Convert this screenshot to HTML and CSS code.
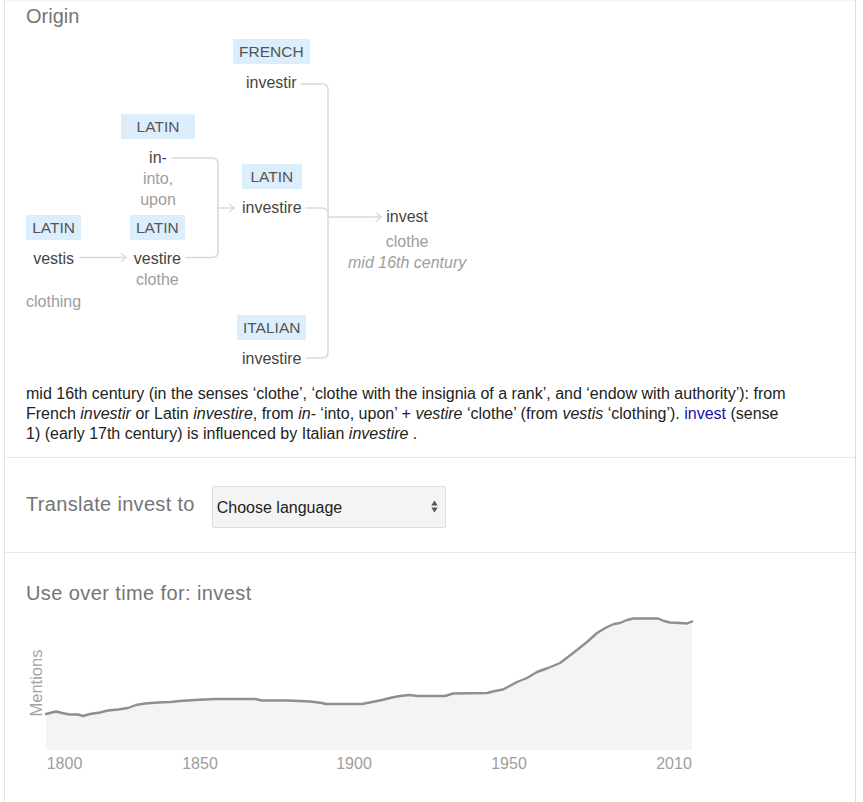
FILE: index.html
```html
<!DOCTYPE html>
<html lang="en">
<head>
<meta charset="utf-8">
<title>invest – Origin</title>
<link rel="stylesheet" href="styles.css">
</head>
<body>
<div class="card">
  <section class="origin">
    <h2 class="title">Origin</h2>
    <div class="etym">
      <svg class="etym-lines" width="829" height="356" viewBox="0 0 829 356" aria-hidden="true">
        <g transform="translate(-26 -28)" fill="none" stroke="#dadada" stroke-width="1.5" stroke-linecap="round" stroke-linejoin="round">
          <path d="M80 257.5 H126"/>
          <path d="M121.5 253.5 L126 257.5 L121.5 261.5"/>
          <path d="M172 158 H212 Q218 158 218 164 V251.5 Q218 257.5 212 257.5 H186"/>
          <path d="M218 208 H234"/>
          <path d="M229.5 204 L234 208 L229.5 212"/>
          <path d="M301 84 H322 Q328 84 328 90 V352 Q328 358 322 358 H306"/>
          <path d="M306 208 H322 Q328 208 328 214"/>
          <path d="M328 217 H381"/>
          <path d="M376.5 213 L381 217 L376.5 221"/>
        </g>
      </svg>
      <div class="node n-vestis"><span class="lang">LATIN</span><span class="word">vestis</span><span class="gloss gloss-far">clothing</span></div>
      <div class="node n-in"><span class="lang">LATIN</span><span class="word">in-</span><span class="gloss">into,</span><span class="gloss">upon</span></div>
      <div class="node n-vestire"><span class="lang">LATIN</span><span class="word">vestire</span><span class="gloss">clothe</span></div>
      <div class="node n-french"><span class="lang">FRENCH</span><span class="word">investir</span></div>
      <div class="node n-latin"><span class="lang">LATIN</span><span class="word">investire</span></div>
      <div class="node n-italian"><span class="lang">ITALIAN</span><span class="word">investire</span></div>
      <div class="node n-invest"><span class="word">invest</span><span class="gloss gloss-near">clothe</span><span class="gloss date">mid 16th century</span></div>
    </div>
    <p class="etym-text">mid 16th century (in the senses ‘clothe’, ‘clothe with the insignia of a rank’, and ‘endow with authority’): from French <i>investir</i> or Latin <i>investire</i>, from <i>in-</i> ‘into, upon’ + <i>vestire</i> ‘clothe’ (from <i>vestis</i> ‘clothing’). <a class="xref" href="#">invest</a> (sense<br>1) (early 17th century) is influenced by Italian <i>investire</i> .</p>
  </section>

  <section class="translate">
    <span class="translate-label">Translate invest to</span>
    <div class="select-wrap">
      <select class="lang-select" aria-label="Choose language">
        <option>Choose language</option>
      </select>
      <svg class="select-arrows" width="7" height="13" viewBox="0 0 7 13" aria-hidden="true">
        <path d="M0.3 5.6 L3.5 0.6 L6.7 5.6 Z" fill="#555"/>
        <path d="M0.3 7.4 L6.7 7.4 L3.5 12.4 Z" fill="#555"/>
      </svg>
    </div>
  </section>

  <section class="usage">
    <h2 class="title usage-title">Use over time for: invest</h2>
    <svg class="chart" width="680" height="175" viewBox="26 605 680 175" aria-label="Use over time chart">
      <polygon class="chart-area" points="46,714 50,713 56,711.5 62,713 70,714.5 78,714.5 83,716 90,714 100,712.5 108,710.5 118,709.5 128,708 136,705 145,703.5 158,702.5 170,702 180,701 195,700 205,699.5 215,699 255,699 262,700.5 288,700.5 310,701.5 322,703 326,704 362,704 372,702 382,700 392,697.5 400,696 409,695 418,696 445,696 453,693.5 487,693 495,691 503,689.5 517,682 527,678 537,672 548,668 560,663 568,657 577,650 587,642 597,633 607,627 614,624 620,623 627,620 633,618.5 658,618.5 664,621 670,622.5 680,623 687,623.5 692,621.5 692,750 46,750"/>
      <polyline class="chart-line" points="46,714 50,713 56,711.5 62,713 70,714.5 78,714.5 83,716 90,714 100,712.5 108,710.5 118,709.5 128,708 136,705 145,703.5 158,702.5 170,702 180,701 195,700 205,699.5 215,699 255,699 262,700.5 288,700.5 310,701.5 322,703 326,704 362,704 372,702 382,700 392,697.5 400,696 409,695 418,696 445,696 453,693.5 487,693 495,691 503,689.5 517,682 527,678 537,672 548,668 560,663 568,657 577,650 587,642 597,633 607,627 614,624 620,623 627,620 633,618.5 658,618.5 664,621 670,622.5 680,623 687,623.5 692,621.5"/>
      <text class="chart-ylabel" x="42" y="683" transform="rotate(-90 42 683)">Mentions</text>
      <text class="chart-xlabel" x="64.5" y="769">1800</text>
      <text class="chart-xlabel" x="200" y="769">1850</text>
      <text class="chart-xlabel" x="354" y="769">1900</text>
      <text class="chart-xlabel" x="509" y="769">1950</text>
      <text class="chart-xlabel" x="674" y="769">2010</text>
    </svg>
  </section>
</div>
</body>
</html>
```

FILE: styles.css
```css
html, body {
  margin: 0;
  padding: 0;
  background: #ffffff;
}

body {
  font-family: "Liberation Sans", Arial, sans-serif;
  color: #222222;
}

.card {
  margin-left: 4px;
  width: 852px;
  min-height: 100vh;
  box-sizing: border-box;
  border-left: 1px solid #e3e3e3;
  border-right: 1px solid #dcdcdc;
  box-shadow: inset 0 3px 3px -3px rgba(0, 0, 0, 0.12);
}

.title {
  margin: 0;
  font-weight: normal;
  font-size: 20px;
  line-height: 24px;
  color: #757575;
}

/* ---------- Origin ---------- */
.origin {
  padding: 4px 21px 13px;
}

.etym {
  position: relative;
  height: 356px;
}

.etym-lines {
  position: absolute;
  left: 0;
  top: 0;
  overflow: visible;
}

.node {
  position: absolute;
  display: flex;
  flex-direction: column;
  align-items: stretch;
  text-align: center;
  font-size: 16px;
  line-height: 21px;
}

.lang {
  height: 25px;
  line-height: 25px;
  padding: 0 6px;
  margin-bottom: 8px;
  background: #dcedfc;
  color: #555555;
  font-size: 15.5px;
  white-space: nowrap;
}

.word {
  color: #444444;
  white-space: nowrap;
}

.gloss {
  color: #9e9e9e;
  white-space: nowrap;
}

.gloss-far {
  margin-top: 22px;
}

.gloss-near {
  margin-top: 4px;
}

.date {
  font-style: italic;
}

.n-vestis  { left: 0;     top: 187px; }
.n-in      { left: 95px;  top: 86px; width: 74px; }
.n-vestire { left: 104px; top: 187px; }
.n-french  { left: 207px; top: 11px; }
.n-latin   { left: 216px; top: 136px; }
.n-italian { left: 211px; top: 287px; }
.n-invest  { left: 322px; top: 178px; }

.etym-text {
  margin: 0;
  font-size: 16px;
  line-height: 20px;
  color: #222222;
}

.xref {
  color: #1a0dab;
  text-decoration: none;
}

/* ---------- Translate ---------- */
.translate {
  display: flex;
  align-items: center;
  gap: 17px;
  padding: 28px 21px 24px;
  border-top: 1px solid #e8e8e8;
}

.translate-label {
  font-size: 20px;
  line-height: 24px;
  letter-spacing: 0.32px;
  padding-bottom: 6px;
  color: #757575;
}

.select-wrap {
  position: relative;
  width: 234px;
  height: 42px;
}

.lang-select {
  -webkit-appearance: none;
  appearance: none;
  display: block;
  width: 100%;
  height: 100%;
  box-sizing: border-box;
  margin: 0;
  padding: 0 20px 0 4px;
  border: 1px solid #dddddd;
  border-radius: 2px;
  background: #f4f4f4;
  color: #222222;
  font-family: "Liberation Sans", Arial, sans-serif;
  font-size: 16px;
  outline: none;
}

.select-arrows {
  position: absolute;
  right: 8px;
  top: 14px;
  pointer-events: none;
}

/* ---------- Usage chart ---------- */
.usage {
  padding: 28px 21px 0;
  border-top: 1px solid #e8e8e8;
}

.usage-title {
  letter-spacing: 0.4px;
}

.chart {
  display: block;
  overflow: visible;
}

.chart-area {
  fill: #f4f4f4;
  stroke: none;
}

.chart-line {
  fill: none;
  stroke: #8f8f8f;
  stroke-width: 2.4;
  stroke-linejoin: round;
  stroke-linecap: round;
}

.chart-ylabel {
  font-family: "Liberation Sans", Arial, sans-serif;
  font-size: 16.5px;
  fill: #a3a3a3;
  text-anchor: middle;
}

.chart-xlabel {
  font-family: "Liberation Sans", Arial, sans-serif;
  font-size: 16px;
  fill: #9e9e9e;
  text-anchor: middle;
}
```
